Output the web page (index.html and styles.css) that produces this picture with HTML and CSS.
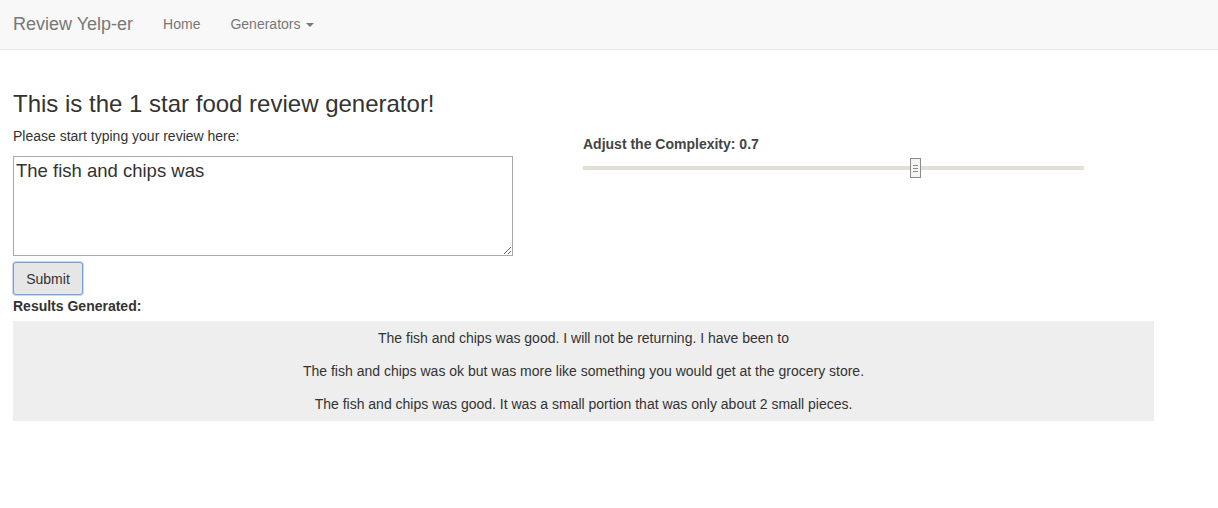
FILE: index.html
```html
<!DOCTYPE html>
<html>
<head>
<meta charset="utf-8">
<title>Review Yelp-er</title>
<link rel="stylesheet" href="styles.css">
</head>
<body>
<nav class="navbar">
  <a class="brand">Review Yelp-er</a>
  <a class="nav-link">Home</a>
  <a class="nav-link">Generators <span class="caret"></span></a>
</nav>
<main class="page">
  <h3 class="title">This is the 1 star food review generator!</h3>
  <div class="row">
    <div class="left">
      <div class="prompt">Please start typing your review here:</div>
      <textarea class="review">The fish and chips was</textarea>
      <button class="submit">Submit</button>
    </div>
    <div class="right">
      <div class="slider-label">Adjust the Complexity: 0.7</div>
      <div class="slider">
        <div class="track"></div>
        <div class="thumb"><span></span><span></span><span></span></div>
      </div>
    </div>
  </div>
  <div class="results-label">Results Generated:</div>
  <div class="results">
    <p>The fish and chips was good. I will not be returning. I have been to</p>
    <p>The fish and chips was ok but was more like something you would get at the grocery store.</p>
    <p>The fish and chips was good. It was a small portion that was only about 2 small pieces.</p>
  </div>
</main>
</body>
</html>
```

FILE: styles.css
```css
html, body {
  margin: 0;
  padding: 0;
}
body {
  font-family: "Liberation Sans", Arial, sans-serif;
  font-size: 14px;
  line-height: 20px;
  color: #333;
  background: #fff;
}
.navbar {
  height: 48px;
  padding-bottom: 1px;
  background: #f8f8f8;
  border-bottom: 1px solid #e7e7e7;
  display: flex;
  align-items: center;
  padding-left: 13px;
}
.brand {
  font-size: 18px;
  color: #777;
  margin-right: 30px;
}
.nav-link {
  font-size: 14px;
  color: #777;
  margin-right: 30px;
}
.caret {
  display: inline-block;
  width: 0;
  height: 0;
  margin-left: 2px;
  vertical-align: middle;
  border-top: 4px solid #777;
  border-left: 4px solid transparent;
  border-right: 4px solid transparent;
}
.page {
  padding: 0 64px 0 13px;
}
.title {
  font-size: 24px;
  font-weight: 500;
  line-height: 28px;
  margin: 40px 0 0 0;
}
.row {
  display: flex;
  gap: 70px;
}
.left {
  width: 500px;
  display: flex;
  flex-direction: column;
  align-items: flex-start;
}
.prompt {
  margin-top: 8px;
  height: 20px;
}
.review {
  margin-top: 10px;
  width: 500px;
  height: 100px;
  box-sizing: border-box;
  border: 1px solid #a9a9a9;
  font-family: "Liberation Sans", Arial, sans-serif;
  font-size: 18.5px;
  line-height: 22px;
  color: #333;
  padding: 3px 2px;
  resize: both;
}
.submit {
  margin-top: 6px;
  width: 70px;
  height: 33px;
  font-family: "Liberation Sans", Arial, sans-serif;
  font-size: 14px;
  color: #333;
  background: #e6e6e6;
  border: 1px solid #7a9fd6;
  border-radius: 3px;
  box-shadow: 0 0 0 1px #c9d8f0;
}
.right {
  width: 501px;
  padding-top: 16px;
}
.slider-label {
  font-weight: bold;
  font-size: 14px;
  color: #444;
  height: 20px;
}
.slider {
  position: relative;
  height: 22px;
  margin-top: 4px;
}
.track {
  position: absolute;
  left: 0;
  right: 0;
  top: 8px;
  height: 4px;
  background: #e2ded8;
}
.thumb {
  position: absolute;
  left: 327px;
  top: 0;
  width: 9px;
  height: 18px;
  background: #f4f4f4;
  border: 1px solid #8a8a8a;
  display: flex;
  flex-direction: column;
  justify-content: center;
  align-items: center;
  gap: 2px;
}
.thumb span {
  width: 5px;
  height: 1px;
  background: #8a8a8a;
}
.results-label {
  font-weight: bold;
  font-size: 14px;
  margin-top: 1px;
  height: 20px;
}
.results {
  margin-top: 5px;
  background: #eee;
  text-align: center;
  padding: 1px 0 0;
}
.results p {
  margin: 0;
  line-height: 33px;
}
```
